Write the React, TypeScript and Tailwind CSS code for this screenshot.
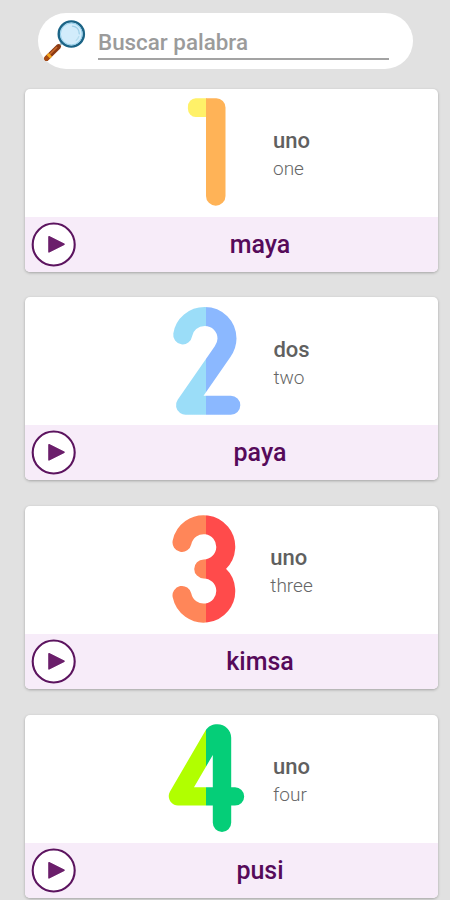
import type { ReactNode } from "react";

type Word = {
  id: number;
  spanish: string;
  english: string;
  aymara: string;
  numeral: ReactNode;
};

// every numeral is split in two tones around its middle
function TwoTone({ id, left, right }: { id: string; left: string; right: string }) {
  return (
    <defs>
      <linearGradient id={id} gradientUnits="userSpaceOnUse" x1="0" y1="0" x2="108" y2="0">
        <stop offset="0.496" stopColor={left} />
        <stop offset="0.496" stopColor={right} />
      </linearGradient>
    </defs>
  );
}

const words: Word[] = [
  {
    id: 1,
    spanish: "uno",
    english: "one",
    aymara: "maya",
    numeral: (
      <>
        <path d="M54.5.3H43.2a7.8 8.6 0 0 0-7.8 8.6v1.5a7.8 8.6 0 0 0 7.8 8.6h11.3z" fill="#fff168" />
        <path d="M53.5.3h10.3a9.2 9.2 0 0 1 9.2 9.2v88.4a9.75 9.75 0 0 1-19.5 0z" fill="#ffb357" />
      </>
    ),
  },
  {
    id: 2,
    spanish: "dos",
    english: "two",
    aymara: "paya",
    numeral: (
      <>
        <TwoTone id="two" left="#9bddf8" right="#8bb8ff" />
        <path
          d="M30.2 27.9C31.8 17.3 41 9.5 52.3 9.5c12.6 0 22.2 9.8 22.2 22.1 0 4.8-1.5 9-4.5 13.2L33 98.2h45.3"
          fill="none"
          stroke="url(#two)"
          strokeWidth="19"
          strokeLinecap="round"
          strokeLinejoin="round"
        />
      </>
    ),
  },
  {
    id: 3,
    spanish: "uno",
    english: "three",
    aymara: "kimsa",
    numeral: (
      <>
        <TwoTone id="three" left="#ff8659" right="#ff4b4b" />
        <path
          d="M29.5 27.4A22.1 22.1 0 1 1 51.2 53.9A22.1 22.1 0 1 1 29.5 80.4"
          fill="none"
          stroke="url(#three)"
          strokeWidth="19"
          strokeLinecap="round"
          strokeLinejoin="round"
        />
      </>
    ),
  },
  {
    id: 4,
    spanish: "uno",
    english: "four",
    aymara: "pusi",
    numeral: (
      <>
        <TwoTone id="four" left="#b1ff00" right="#05ce78" />
        <path
          d="M17.5 67.5L53 6.5C55.8 2.2 60 .3 65 .3C72.5 .3 78.7 6.3 78.7 13.8V63.2H82.5a9.2 9.2 0 0 1 0 18.4H78.7V98.8a9.2 9.2 0 0 1-18.4 0V81.6H25.5C18.4 81.6 13.9 73.5 17.5 67.5ZM41.5 63.2H60.3V31Z"
          fill="url(#four)"
          fillRule="evenodd"
        />
      </>
    ),
  },
];

function MagnifierIcon() {
  return (
    <svg viewBox="0 0 44 44" className="h-11 w-11 shrink-0" fill="none">
      <path d="M14.5 28.5L18.5 24.5" stroke="#9db7c4" strokeWidth="2" />
      <path d="M3.6 39.4L15.5 27.6" stroke="#8c3a12" strokeWidth="5" strokeLinecap="round" />
      <path d="M5 37L14 28" stroke="#c96a2c" strokeWidth="1.6" />
      <path d="M3.4 39.6L5 38" stroke="#a84b14" strokeWidth="4.6" strokeLinecap="round" />
      <path d="M5.3 37.7L7.3 35.7" stroke="#f7a81e" strokeWidth="5" />
      <circle cx="28.3" cy="15" r="12.6" fill="#d2ecfb" stroke="#1b6486" strokeWidth="2.4" />
      <circle cx="28.3" cy="15" r="10.9" stroke="#8ccbe8" strokeWidth="0.9" />
      <path d="M29.5 7.2c4 .4 6.6 3.4 6.8 7.6" stroke="#9fd0e8" strokeWidth="1.3" strokeLinecap="round" />
      <path d="M35.8 17.5c-.5 1.6-1.4 2.9-2.7 3.9" stroke="#b4dcee" strokeWidth="1.2" strokeLinecap="round" />
    </svg>
  );
}

function PlayButton() {
  return (
    <button type="button" aria-label="play" className="ml-1.5 shrink-0">
      <svg viewBox="0 0 45 45" className="block h-[45px] w-[45px]">
        <circle cx="22.7" cy="22.5" r="21" fill="#fff" stroke="#5c145f" strokeWidth="2.1" />
        <path d="M18 14.8L33 22.2L18 29.8Z" fill="#6b1f6b" stroke="#6b1f6b" strokeWidth="1.6" strokeLinejoin="round" />
      </svg>
    </button>
  );
}

function WordCard({ word }: { word: Word }) {
  return (
    <article className="h-[183px] w-[413px] shrink-0 overflow-hidden rounded-[5px] bg-white shadow-[0_1px_3px_rgba(0,0,0,0.28)]">
      <div className="flex h-[128px] pl-[127px] pt-[9.5px]">
        <svg viewBox="-0.5 0 108 108" className="h-[108px] w-[108px] shrink-0">
          {word.numeral}
        </svg>
        <div className="flex w-[63px] justify-center pt-[29px]">
          <div>
            <p className="text-[22px] leading-[27px] font-medium text-[#606060]">{word.spanish}</p>
            <p className="text-[19px] leading-[29px] font-light text-[#666]">{word.english}</p>
          </div>
        </div>
      </div>
      <div className="flex h-[55px] items-center bg-[#f7ecf9]">
        <PlayButton />
        <p className="grow pl-[6px] text-center text-[25px] leading-none font-medium text-[#560a5a]">
          {word.aymara}
        </p>
      </div>
    </article>
  );
}

export default function App() {
  return (
    <main className="h-[900px] w-[450px] overflow-hidden bg-[#e1e1e1] pt-[13px] font-['Roboto',sans-serif]">
      <div className="ml-[38px] flex h-[56px] w-[375px] rounded-full bg-white pl-[5px] pt-[6px]">
        <MagnifierIcon />
        <div className="ml-[11px] h-[41px] w-[291px] border-b-2 border-[#a3a3a3]">
          <p className="pt-[9px] text-[22.4px] leading-[28px] font-medium text-[#9b9b9b]">Buscar palabra</p>
        </div>
      </div>
      <section className="mt-[19.6px] ml-[25px] flex flex-col gap-[25.7px]">
        {words.map((word) => (
          <WordCard key={word.id} word={word} />
        ))}
      </section>
    </main>
  );
}
